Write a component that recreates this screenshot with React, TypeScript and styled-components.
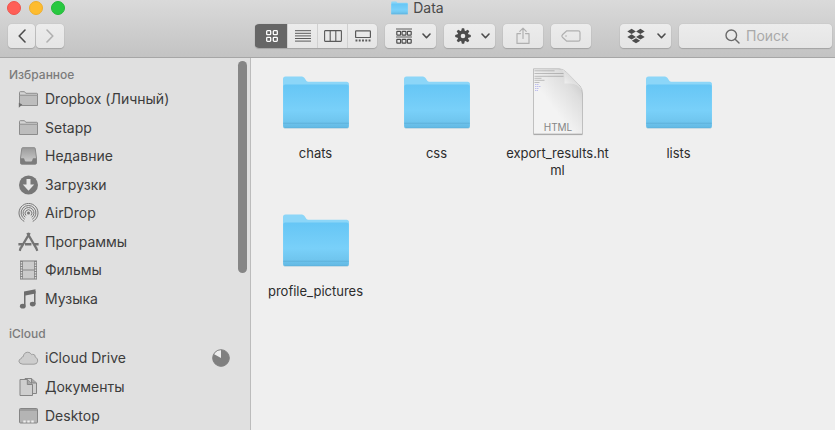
import React from "react";
import styled, { createGlobalStyle, css } from "styled-components";

const GlobalStyle = createGlobalStyle`
  *, *::before, *::after { box-sizing: border-box; }
  body {
    margin: 0;
    background: #efefef;
    color: #3a3a3a;
    font-family: Inter, "Noto Sans", "Liberation Sans", sans-serif;
    font-size: 13px;
  }
  button, input { font: inherit; color: inherit; }
  svg { display: block; flex: none; }
`;

const Window = styled.div`
  display: flex;
  flex-direction: column;
  min-height: 100vh;
`;

const Header = styled.header`
  background: linear-gradient(#dadada, #c3c3c3);
  border-bottom: 1px solid #a6a6a6;
`;

const TitleBar = styled.div`
  display: grid;
  grid-template-columns: 1fr auto 1fr;
  align-items: center;
  height: 16px;
  padding: 0 7px;
`;

const Lights = styled.div`
  display: flex;
  gap: 8px;
`;

const Light = styled.button<{ $color: string; $edge: string }>`
  width: 14px;
  height: 14px;
  padding: 0;
  border: 1px solid ${(p) => p.$edge};
  border-radius: 50%;
  background: ${(p) => p.$color};
`;

const Title = styled.h1`
  display: flex;
  align-items: center;
  gap: 5px;
  margin: 0;
  font-size: 14px;
  font-weight: 400;
  line-height: 16px;
  color: #4a4a4a;
`;

const Toolbar = styled.div`
  display: flex;
  gap: 8px;
  padding: 8px 3px 9px 8px;
`;

const Nav = styled.div`
  display: flex;
  gap: 1px;
  width: 239px;
  flex: none;
`;

const raised = css`
  border: 0;
  border-radius: 4px;
  background: linear-gradient(#ececec, #e5e5e5);
  box-shadow: 0 0 1px rgba(0, 0, 0, 0.22), 0 1px 1px rgba(0, 0, 0, 0.16);
`;

const ToolButton = styled.button<{ $width: number }>`
  ${raised}
  display: flex;
  align-items: center;
  justify-content: center;
  flex: none;
  width: ${(p) => p.$width}px;
  height: 24px;
  padding: 0;
  color: #4c4c4c;
  &:disabled { color: #b0b0b0; }
`;

const MenuButton = styled(ToolButton)<{ $inset: number }>`
  justify-content: space-between;
  padding: 0 5px 0 ${(p) => p.$inset}px;
`;

const Segments = styled.div`
  ${raised}
  display: flex;
  flex: none;
  width: 122px;
  height: 24px;
  overflow: hidden;
`;

const Segment = styled.button<{ $active?: boolean }>`
  display: flex;
  align-items: center;
  justify-content: center;
  flex: 1 1 0;
  padding: 0;
  border: 0;
  border-left: 1px solid #d0d0d0;
  background: transparent;
  color: #5a5a5a;
  ${(p) =>
    p.$active &&
    css`
      flex-basis: 3px;
      border-left-color: #666666;
      background: #666666;
      color: #ffffff;
    `}
`;

const DropboxSlot = styled.div`
  margin-left: 21px;
`;

const SearchField = styled.label`
  ${raised}
  display: flex;
  align-items: center;
  justify-content: center;
  gap: 6px;
  flex: 1;
  height: 24px;
  padding-left: 8px;
  color: #6a6a6a;
`;

const SearchInput = styled.input`
  width: 48px;
  padding: 0;
  border: 0;
  outline: 0;
  background: transparent;
  font-size: 14px;
  line-height: 20px;
  &::placeholder { color: #a9a9a9; opacity: 1; }
`;

const Body = styled.div`
  display: flex;
  flex: 1;
`;

const Sidebar = styled.nav`
  position: relative;
  flex: none;
  width: 251px;
  padding-top: 7px;
  border-right: 1px solid #bcbcbc;
  background: #e0e0e0;
`;

const ScrollThumb = styled.div`
  position: absolute;
  top: 3px;
  right: 3px;
  width: 9px;
  height: 212px;
  border-radius: 5px;
  background: #868686;
`;

const Section = styled.section`
  & + & { margin-top: 11px; }
`;

const SectionTitle = styled.h2`
  margin: 0;
  padding-left: 9px;
  font-size: 12px;
  font-weight: 500;
  line-height: 20px;
  color: #7b7b7b;
`;

const Places = styled.ul<{ $height: number }>`
  display: flex;
  flex-direction: column;
  min-height: ${(p) => p.$height}px;
  margin: 0;
  padding: 0;
  list-style: none;
`;

const Place = styled.li`
  display: flex;
  flex: 1;
`;

const PlaceLink = styled.a`
  display: flex;
  align-items: center;
  flex: 1;
  gap: 6px;
  padding: 0 20px 0 18px;
  font-size: 14px;
  line-height: 20px;
  color: #3c3c3c;
  text-decoration: none;
`;

const PlaceName = styled.span`
  flex: 1;
`;

const Files = styled.main`
  display: grid;
  grid-template-columns: repeat(auto-fill, 121px);
  grid-auto-rows: 138px;
  align-content: start;
  flex: 1;
  padding: 10px 4px 0;
  background: #efefef;
`;

const FileItem = styled.a`
  display: flex;
  flex-direction: column;
  align-items: center;
  gap: 9px;
  color: #2c2c2c;
  text-decoration: none;
`;

const FileName = styled.span`
  width: 108px;
  font-size: 13px;
  line-height: 17px;
  text-align: center;
  word-break: break-all;
`;

const Chevron = () => (
  <svg width="9" height="6" viewBox="0 0 9 6" fill="none" stroke="#4c4c4c" strokeWidth="1.6" strokeLinecap="round" strokeLinejoin="round">
    <path d="M1 1l3.5 3.7L8 1" />
  </svg>
);

const BackIcon = () => (
  <svg width="8" height="14" viewBox="0 0 8 14" fill="none" stroke="currentColor" strokeWidth="1.6" strokeLinecap="round" strokeLinejoin="round">
    <path d="M7 1L1.2 7 7 13" />
  </svg>
);

const ForwardIcon = () => (
  <svg width="8" height="14" viewBox="0 0 8 14" fill="none" stroke="currentColor" strokeWidth="1.6" strokeLinecap="round" strokeLinejoin="round">
    <path d="M1 1l5.8 6L1 13" />
  </svg>
);

const IconViewIcon = () => (
  <svg width="12" height="12" viewBox="0 0 12 12" fill="none" stroke="currentColor" strokeWidth="1.3">
    {[0.7, 7.3].map((x) => [0.7, 7.3].map((y) => <rect key={`${x}-${y}`} x={x} y={y} width="4" height="4" rx="0.8" />))}
  </svg>
);

const ListViewIcon = () => (
  <svg width="16" height="12" viewBox="0 0 16 12" stroke="currentColor" strokeWidth="1">
    <path d="M0 .7h16M0 3.3h16M0 5.9h16M0 8.5h16M0 11.1h16" />
  </svg>
);

const ColumnViewIcon = () => (
  <svg width="18" height="12" viewBox="0 0 18 12" fill="none" stroke="currentColor" strokeWidth="1.1">
    <rect x=".6" y=".6" width="16.8" height="10.8" rx=".6" />
    <path d="M6.2.6v10.8M11.8.6v10.8" />
  </svg>
);

const GalleryViewIcon = () => (
  <svg width="16" height="12" viewBox="0 0 16 12" fill="none" stroke="currentColor">
    <rect x=".6" y=".9" width="14.8" height="6.6" rx=".6" strokeWidth="1.2" />
    <path d="M.5 10.5h15" strokeWidth="1.8" strokeDasharray="1.9 1.37" />
  </svg>
);

const GroupIcon = () => (
  <svg width="16" height="16" viewBox="0 0 16 16" fill="none" stroke="currentColor">
    <path d="M0 1h16M0 9h16" strokeWidth="1.4" opacity=".6" />
    {[0.8, 6.1, 11.4].map((x) => [3.3, 11.3].map((y) => <rect key={`${x}-${y}`} x={x} y={y} width="3.8" height="3.8" rx=".6" strokeWidth="1.2" />))}
  </svg>
);

const GearIcon = () => (
  <svg width="16" height="16" viewBox="0 0 16 16">
    {[0, 45, 90, 135].map((a) => (
      <path key={a} d="M6.900.2h2.200l.8 3v9.600l-.8 3H6.900l-.8-3V3.200z" fill="currentColor" transform={`rotate(${a} 8 8)`} />
    ))}
    <circle cx="8" cy="8" r="5.4" fill="currentColor" />
    <circle cx="8" cy="8" r="2.3" fill="#e9e9e9" />
  </svg>
);

const ShareIcon = () => (
  <svg width="14" height="18" viewBox="0 0 14 18" fill="none" stroke="currentColor" strokeWidth="1.2" strokeLinecap="round" strokeLinejoin="round">
    <path d="M4.5 6.6H1v9.8h12V6.6H9.500M7 11.500V1.400M3.800 4.400L7 1.200l3.200 3.200" />
  </svg>
);

const TagIcon = () => (
  <svg width="20" height="12" viewBox="0 0 20 12" fill="none" stroke="currentColor" strokeWidth="1.2" strokeLinejoin="round">
    <path d="M5.800.8H17.400a1.600 1.600 0 0 1 1.600 1.600v7.200a1.600 1.600 0 0 1-1.600 1.600H5.800L1.400 7.200q-1-1.200 0-2.400z" />
    <circle cx="5" cy="6" r=".8" fill="currentColor" stroke="none" />
  </svg>
);

const DropboxIcon = () => (
  <svg width="18" height="16" viewBox="0 0 18 16" fill="currentColor">
    <path d="M4.600.8L8.900 3.400 4.600 6 .3 3.400zM13.400.8l4.300 2.600L13.400 6 9.100 3.400zM4.600 6.300l4.300 2.600-4.300 2.600L.3 8.900zM13.400 6.300l4.300 2.600-4.300 2.600-4.300-2.600zM9 10.200l4.200 2.500L9 15.200l-4.200-2.500z" />
  </svg>
);

const SearchIcon = () => (
  <svg width="15" height="15" viewBox="0 0 15 15" fill="none" stroke="currentColor" strokeWidth="1.4" strokeLinecap="round">
    <circle cx="6.300" cy="6.300" r="5.300" />
    <path d="M10.200 10.200L14 14" />
  </svg>
);

const FolderShape = () => (
  <>
    <defs>
      <linearGradient id="folderFront" x1="0" y1="0" x2="0" y2="1">
        <stop offset="0" stopColor="#66c6f5" />
        <stop offset=".6" stopColor="#79d0f9" />
        <stop offset=".86" stopColor="#6fc5ee" />
        <stop offset="1" stopColor="#62b8e3" />
      </linearGradient>
    </defs>
    <path d="M1 11q0-2.500 2.500-2.500H20q1.500 0 2.500 1.500l2 3q.6.700 1.800.7H64.500q2.500 0 2.500 2.500V58q0 2-2 2H3q-2 0-2-2z" fill="#8cd6f8" />
    <path d="M1.200 18.500q0-2 2-2H64.800q2 0 2 2V58q0 2-2 2H3.200q-2 0-2-2z" fill="url(#folderFront)" />
    <path d="M1.200 55.300H66.800" stroke="#56a9d3" strokeWidth=".7" opacity=".8" />
    <path d="M1.500 59.600q.7.600 1.700.6H64.800q1 0 1.700-.6" fill="none" stroke="#4f9cc2" strokeWidth=".6" opacity=".6" />
  </>
);

const FolderIcon = () => (
  <svg width="68" height="68" viewBox="0 0 68 68">
    <FolderShape />
  </svg>
);

const TitleFolderIcon = () => (
  <svg width="17" height="14" viewBox="0 8 68 54">
    <FolderShape />
  </svg>
);

const HtmlIcon = () => (
  <svg width="68" height="68" viewBox="0 0 68 68">
    <defs>
      <linearGradient id="page" x1="1" y1="0" x2=".4" y2=".6">
        <stop offset="0" stopColor="#bdbdbd" />
        <stop offset=".45" stopColor="#dedede" />
        <stop offset="1" stopColor="#f3f3f3" />
      </linearGradient>
      <linearGradient id="curl" x1="0" y1="1" x2=".8" y2=".2">
        <stop offset="0" stopColor="#ffffff" />
        <stop offset="1" stopColor="#cfcfcf" />
      </linearGradient>
    </defs>
    <path d="M9.500.8H35q4 0 7.500 3.500L56 18q2.500 3.500 2.500 8v40H9.500z" fill="url(#page)" stroke="#b4b4b4" strokeWidth=".8" />
    <path d="M9.500 66.600h49" stroke="#999999" strokeWidth=".8" />
    <path d="M36 .9q4.500 2 4.500 8v6.600h6q7 0 11.500 7-1-3.500-3.500-6L43 4.700Q39.500 1 36 .9z" fill="url(#curl)" />
    <path d="M10.500 2.800h20M10.500 5.500h29M10.500 8.300h29M10.500 10.300h7M10.500 12.300h10M10.500 14.500h5" stroke="#777777" strokeWidth=".6" opacity=".7" />
    <path d="M11 16.500h4M11 18.500h6M11 20.500h4M11 22.500h3" stroke="#7b7be8" strokeWidth=".8" strokeDasharray="1.500 .5" opacity=".55" />
    <text x="34" y="63" textAnchor="middle" fontFamily="Inter, sans-serif" fontSize="10" fill="#868686">HTML</text>
  </svg>
);

const SideFolder = ({ alias }: { alias?: boolean }) => (
  <svg width="21" height="20" viewBox="0 0 21 20" fill="none">
    <path d="M1.500 6V3.500q0-.8.800-.8h4.200l1.300 1.600h11q.7 0 .7.700v1" fill="#d4d4d4" stroke="#8c8c8c" />
    <path d="M1.500 6.200h18v10.300h-18z" fill="#bdbdbd" stroke="#8c8c8c" />
    {alias && <path d="M.8 18.800v-5l3.500 1.700z" fill="#6d6d6d" />}
  </svg>
);

const RecentsIcon = () => (
  <svg width="21" height="20" viewBox="0 0 21 20">
    <defs>
      <linearGradient id="tray" x1="0" y1="0" x2="0" y2="1">
        <stop offset="0" stopColor="#9a9a9a" />
        <stop offset="1" stopColor="#d2d2d2" />
      </linearGradient>
    </defs>
    <path d="M4.600 1.700h11.800q.7 0 .8.800L18.500 12v5q0 1.200-1.200 1.200H3.700Q2.500 18.200 2.500 17v-5L3.800 2.500q.1-.8.800-.8z" fill="url(#tray)" stroke="#8a8a8a" />
    <path d="M2.600 12.300h3q.5 0 .7.700l.6 1.700q.3.700 1 .7h5.200q.7 0 1-.7l.6-1.700q.2-.7.700-.7h3V17q0 1.200-1.200 1.200H3.800q-1.200 0-1.200-1.200z" fill="#7c7c7c" />
  </svg>
);

const DownloadsIcon = () => (
  <svg width="21" height="20" viewBox="0 0 21 20">
    <circle cx="10.500" cy="10" r="9.500" fill="#777777" />
    <path d="M8.500 4h4v5.600h3.700l-5.700 6.200-5.700-6.200h3.700z" fill="#e6e6e6" />
  </svg>
);

const AirDropIcon = () => (
  <svg width="21" height="20" viewBox="0 0 21 20" fill="none" stroke="#777777" strokeWidth="1">
    <path d="M6.400 18.500A9.500 9.500 0 1 1 14.600 18.500" />
    <path d="M6.800 16.300A7.400 7.400 0 1 1 14.200 16.300" />
    <path d="M7.300 14.300A5.400 5.400 0 1 1 13.700 14.300" />
    <path d="M8 12.500A3.400 3.400 0 1 1 13 12.500" />
    <path d="M10.500 9.200l4.100 9.800H6.400z" fill="#e0e0e0" stroke="none" />
    <circle cx="10.500" cy="9.900" r="1.500" fill="#777777" stroke="none" />
  </svg>
);

const AppsIcon = () => (
  <svg width="21" height="20" viewBox="0 0 21 20" fill="none" stroke="#747474">
    <path d="M9.300 1l8.900 15.200M11.700 1L2.800 16.200" strokeWidth="2.300" />
    <path d="M.4 12.200h4.800M7 12.200h6.400M15.800 12.200h4.800" strokeWidth="2.400" />
    <path d="M2.700 15.500l-.9 3.400M18 15.500l1.300 3.400" strokeWidth="2.200" />
  </svg>
);

const MoviesIcon = () => (
  <svg width="21" height="20" viewBox="0 0 21 20" fill="none">
    <path d="M2 .5h17v19H2z" fill="#cbcbcb" />
    <path d="M3.500.5v19M17.500.5v19" stroke="#858585" strokeWidth="3" />
    <path d="M3.500 2v17M17.500 2v17" stroke="#dadada" strokeWidth="1.400" strokeDasharray="1.500 1" />
    <path d="M5 1h11M5 10h11M5 19h11" stroke="#858585" />
  </svg>
);

const MusicIcon = () => (
  <svg width="21" height="20" viewBox="0 0 21 20" fill="#6d6d6d">
    <path d="M6 2.600L17.500.2v4.200L7.500 6.400v10.300H6z" />
    <path d="M16 2h1.500v13H16z" />
    <ellipse cx="4.800" cy="17.200" rx="2.900" ry="2.400" />
    <ellipse cx="14.700" cy="15.100" rx="2.900" ry="2.400" />
  </svg>
);

const CloudIcon = () => (
  <svg width="21" height="20" viewBox="0 0 21 20">
    <path d="M4.800 16.200H16a3.600 3.600 0 0 0 1.300-7Q17.400 6.400 15 6.300q-.7 0-1.300.4Q12.300 4.200 9.800 4.200q-4 .2-4.600 4.600-.9-.2-1.500.6l-.3 1.100Q1 11 .9 13.200q.2 2.700 3.900 3z" fill="#cdcdcd" stroke="#979797" strokeWidth=".9" />
  </svg>
);

const DocumentsIcon = () => (
  <svg width="21" height="20" viewBox="0 0 21 20" fill="#cfcfcf" stroke="#858585" strokeLinejoin="round">
    <path d="M7 1.500h6.500l5 4.500v10.500H7z" />
    <path d="M13.500 1.500V6h5" fill="#a8a8a8" />
    <path d="M2 2.500h7.300l5.200 5v11H2z" />
    <path d="M9.300 2.500v5h5.200" fill="#a8a8a8" />
  </svg>
);

const DesktopIcon = () => (
  <svg width="21" height="20" viewBox="0 0 21 20">
    <rect x="1.500" y="2.500" width="18" height="14.500" rx="1" fill="#b4b4b4" stroke="#858585" />
    <path d="M2 4h17.500" stroke="#858585" />
    <path d="M5.300 15.400h2.400M9.300 15.400h2.400M13.300 15.400h2.400" stroke="#efefef" strokeWidth="2" />
  </svg>
);

const SyncPie = () => (
  <svg width="18" height="18" viewBox="0 0 18 18" role="img" aria-label="83%">
    <circle cx="9" cy="9" r="8.300" fill="#ededed" stroke="#808080" />
    <path d="M9 9V.7A8.300 8.300 0 1 1 1.800 4.900z" fill="#808080" />
  </svg>
);

type PlaceData = { name: string; icon: React.ReactNode; syncing?: boolean };

const sections: { title: string; height: number; places: PlaceData[] }[] = [
  {
    title: "Избранное",
    height: 228,
    places: [
      { name: "Dropbox (Личный)", icon: <SideFolder alias /> },
      { name: "Setapp", icon: <SideFolder /> },
      { name: "Недавние", icon: <RecentsIcon /> },
      { name: "Загрузки", icon: <DownloadsIcon /> },
      { name: "AirDrop", icon: <AirDropIcon /> },
      { name: "Программы", icon: <AppsIcon /> },
      { name: "Фильмы", icon: <MoviesIcon /> },
      { name: "Музыка", icon: <MusicIcon /> },
    ],
  },
  {
    title: "iCloud",
    height: 86,
    places: [
      { name: "iCloud Drive", icon: <CloudIcon />, syncing: true },
      { name: "Документы", icon: <DocumentsIcon /> },
      { name: "Desktop", icon: <DesktopIcon /> },
    ],
  },
];

const files = [
  { name: "chats", folder: true },
  { name: "css", folder: true },
  { name: "export_results.html", folder: false },
  { name: "lists", folder: true },
  { name: "profile_pictures", folder: true },
];

export default function App() {
  return (
    <Window>
      <GlobalStyle />
      <Header>
        <TitleBar>
          <Lights>
            <Light $color="#ff5f57" $edge="#ee544c" aria-label="Закрыть" />
            <Light $color="#febc2e" $edge="#eeae2c" aria-label="Свернуть" />
            <Light $color="#28c840" $edge="#22b838" aria-label="Развернуть" />
          </Lights>
          <Title>
            <TitleFolderIcon />
            Data
          </Title>
        </TitleBar>
        <Toolbar>
          <Nav>
            <ToolButton $width={27} aria-label="Назад"><BackIcon /></ToolButton>
            <ToolButton $width={28} aria-label="Вперёд" disabled><ForwardIcon /></ToolButton>
          </Nav>
          <Segments role="group" aria-label="Вид">
            <Segment $active aria-pressed="true" aria-label="Значки"><IconViewIcon /></Segment>
            <Segment aria-pressed="false" aria-label="Список"><ListViewIcon /></Segment>
            <Segment aria-pressed="false" aria-label="Колонки"><ColumnViewIcon /></Segment>
            <Segment aria-pressed="false" aria-label="Галерея"><GalleryViewIcon /></Segment>
          </Segments>
          <MenuButton $width={51} $inset={11} aria-haspopup="menu" aria-label="Группировка"><GroupIcon /><Chevron /></MenuButton>
          <MenuButton $width={51} $inset={11} aria-haspopup="menu" aria-label="Действия"><GearIcon /><Chevron /></MenuButton>
          <ToolButton $width={40} aria-label="Поделиться" disabled><ShareIcon /></ToolButton>
          <ToolButton $width={40} aria-label="Теги" disabled><TagIcon /></ToolButton>
          <DropboxSlot>
            <MenuButton $width={51} $inset={7} aria-haspopup="menu" aria-label="Dropbox"><DropboxIcon /><Chevron /></MenuButton>
          </DropboxSlot>
          <SearchField>
            <SearchIcon />
            <SearchInput type="text" placeholder="Поиск" aria-label="Поиск" />
          </SearchField>
        </Toolbar>
      </Header>
      <Body>
        <Sidebar>
          {sections.map((s) => (
            <Section key={s.title}>
              <SectionTitle>{s.title}</SectionTitle>
              <Places $height={s.height}>
                {s.places.map((p) => (
                  <Place key={p.name}>
                    <PlaceLink href="#">
                      {p.icon}
                      <PlaceName>{p.name}</PlaceName>
                      {p.syncing && <SyncPie />}
                    </PlaceLink>
                  </Place>
                ))}
              </Places>
            </Section>
          ))}
          <ScrollThumb />
        </Sidebar>
        <Files>
          {files.map((f) => (
            <FileItem key={f.name} href="#">
              {f.folder ? <FolderIcon /> : <HtmlIcon />}
              <FileName>{f.name}</FileName>
            </FileItem>
          ))}
        </Files>
      </Body>
    </Window>
  );
}
